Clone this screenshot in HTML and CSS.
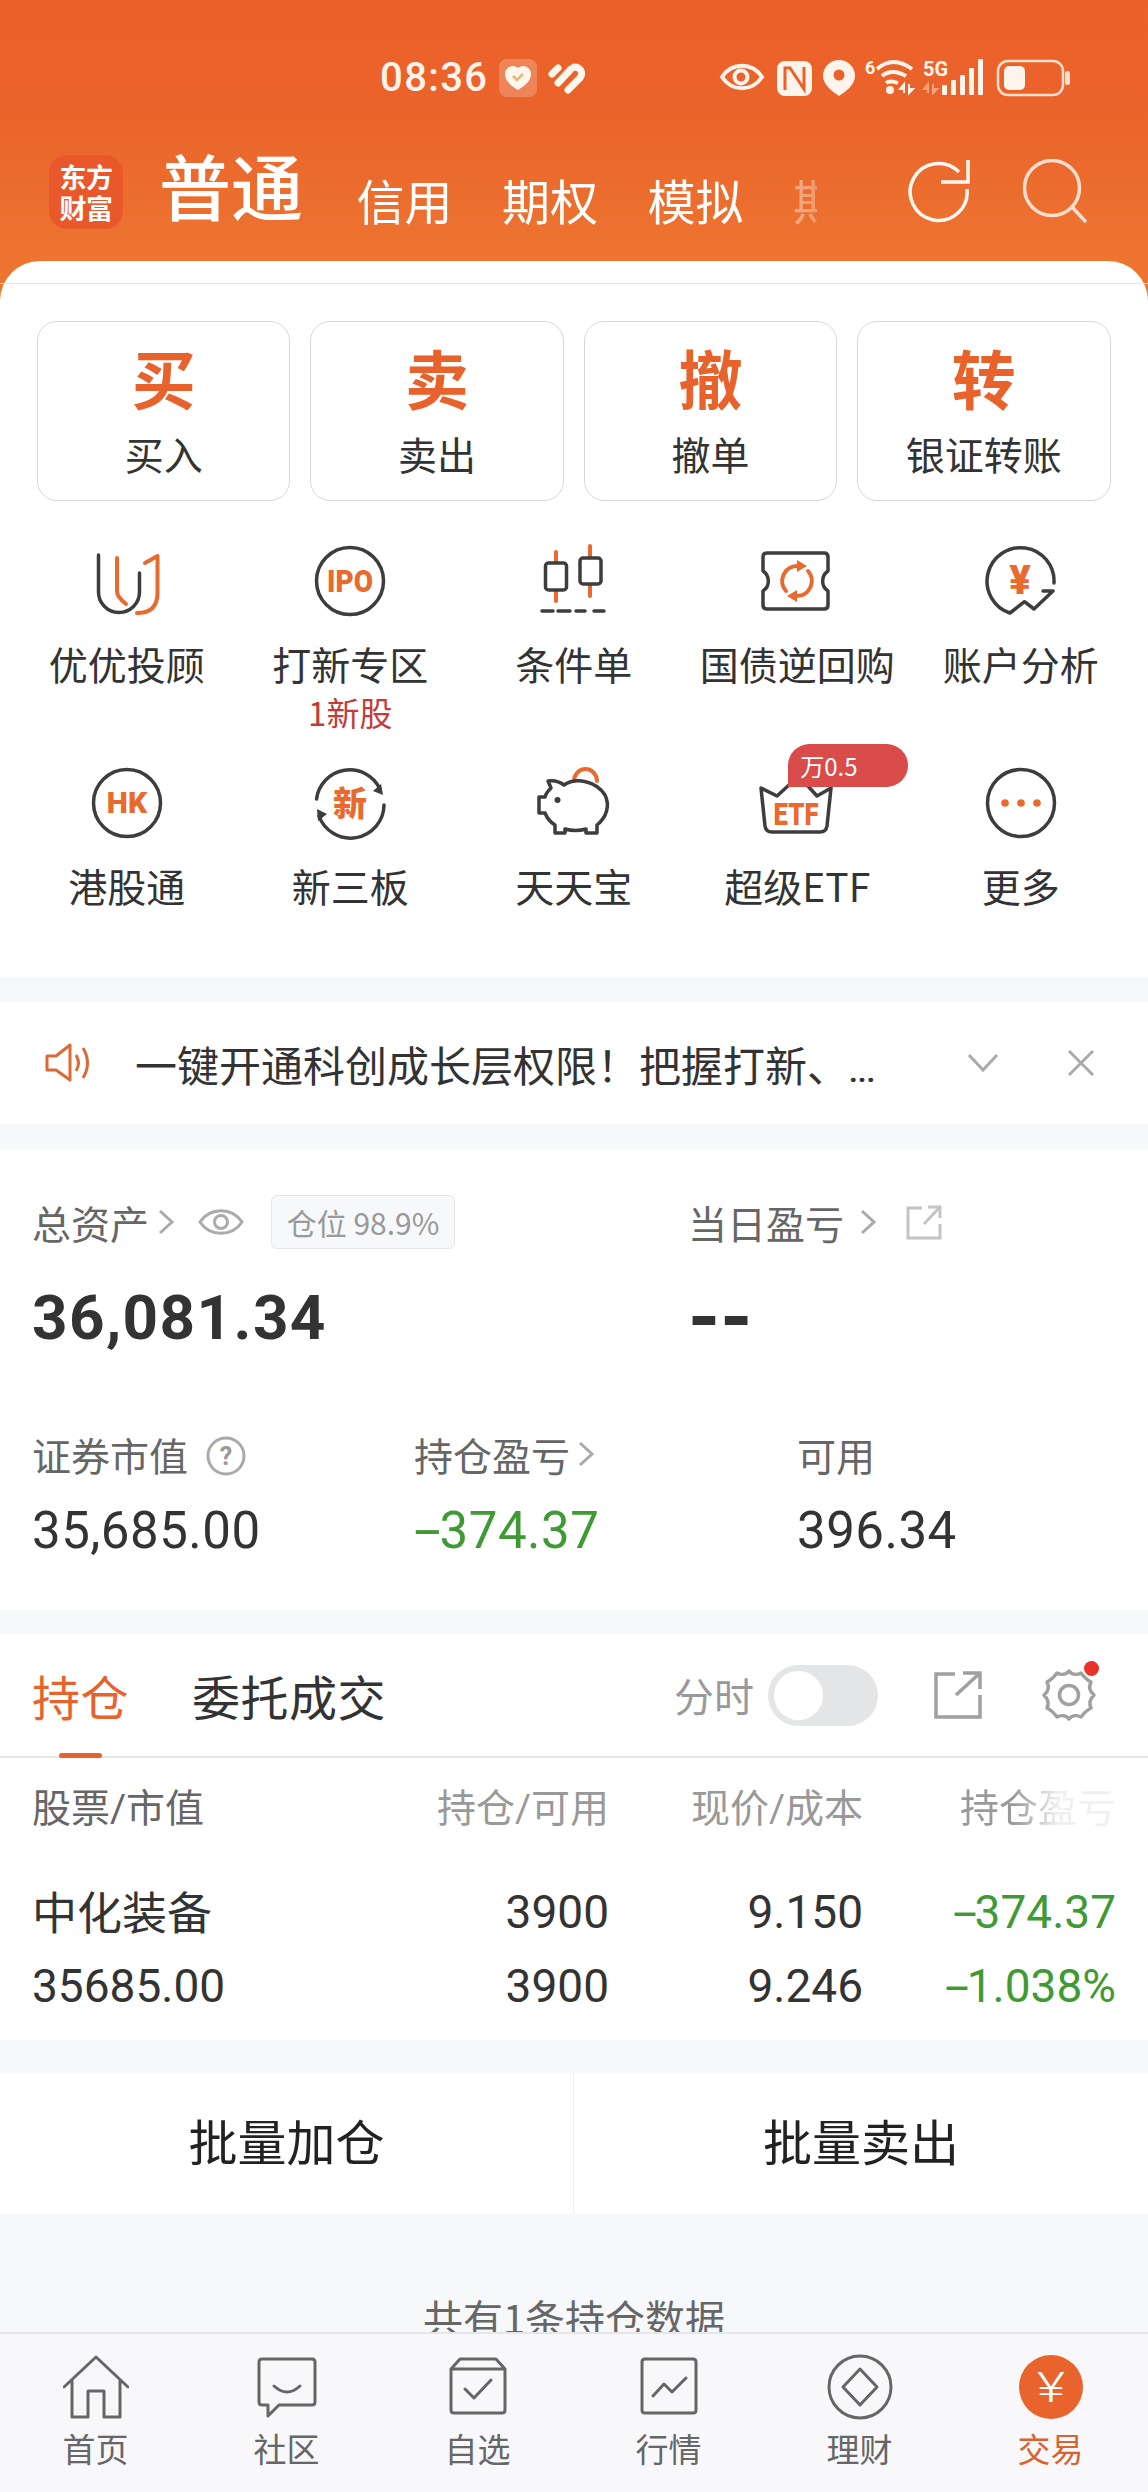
FILE: index.html
```html
<!DOCTYPE html>
<html lang="zh-CN">
<head>
<meta charset="utf-8">
<title>交易</title>
<link rel="stylesheet" href="styles.css">
</head>
<body>
<div class="page">
  <div class="main">
    <header class="header">
      <div class="status">
        <span class="time">08:36</span>
        <svg class="st-left" viewBox="495 55 95 45" width="95" height="45">
          <rect x="499" y="59" width="38" height="38" rx="8" fill="#fff" opacity=".22"/>
          <path d="M518 90 C508 84 505 79 505 74 C505 69 509 66 513 66 C515 66 517 67 518 68 C519 67 521 66 523 66 C527 66 531 69 531 74 C531 79 528 84 518 90Z" fill="#fff6ec"/>
          <path d="M513 76 L517 80 L523 74" fill="none" stroke="#eeb27e" stroke-width="2.5"/>
          <path d="M552 74 L558 68 M558 83 L571 69 M568 90 L580 78 C584 72 580 67 574 67" fill="none" stroke="#fff6ec" stroke-width="7" stroke-linecap="round"/>
        </svg>
        <svg class="st-right" viewBox="710 40 380 70" width="380" height="70">
          <path d="M722 77 C732 62 752 62 762 77 C752 92 732 92 722 77Z" fill="none" stroke="#fff4ec" stroke-width="4"/>
          <circle cx="741" cy="77" r="6.5" fill="none" stroke="#fff4ec" stroke-width="4"/>
          <rect x="777" y="61" width="35" height="35" rx="8" fill="#fff4ec"/>
          <path d="M785 90 V68 H790 L804 89 V67" fill="none" stroke="#ea6229" stroke-width="3"/>
          <path d="M839 60 C848 60 855 67 855 76 C855 85 845 92 839 96 C833 92 823 85 823 76 C823 67 830 60 839 60Z" fill="#fff4ec"/>
          <circle cx="839" cy="75" r="5.5" fill="#ea6229"/>
          <text class="st-tx" x="865" y="74">6</text>
          <path d="M877 69 Q893 55 912 69 M882 76 Q892 68 906 76 M886 83 Q890 80 898 83" fill="none" stroke="#fff4ec" stroke-width="4"/>
          <circle cx="890" cy="90" r="4" fill="#fff4ec"/>
          <path d="M904 93 V84 L900 89 H904 M909 84 V93 L913 89 H909" fill="#fff4ec" stroke="#fff4ec" stroke-width="2"/>
          <text class="st-tx5" x="923" y="76">5G</text>
          <path d="M928 93 V84 L924 89 H928 M933 84 V93 L937 89 H933" fill="#f3a27a" stroke="#f3a27a" stroke-width="2"/>
          <g fill="#fff4ec">
            <rect x="942" y="85" width="5" height="10" rx="1"/>
            <rect x="951" y="80" width="5" height="15" rx="1"/>
            <rect x="960" y="75" width="5" height="20" rx="1"/>
            <rect x="969" y="68" width="5" height="27" rx="1"/>
            <rect x="978" y="59" width="5" height="36" rx="1"/>
          </g>
          <rect x="998" y="61" width="65" height="34" rx="10" fill="none" stroke="#fff4ec" stroke-width="2.5" opacity=".85"/>
          <rect x="1004" y="66" width="21" height="24" rx="5" fill="#fff4ec"/>
          <rect x="1065" y="71" width="5" height="14" rx="2.5" fill="#fff4ec" opacity=".85"/>
        </svg>
      </div>
      <div class="nav">
        <div class="logo"><span>东方</span><span>财富</span></div>
        <div class="tabs">
          <span class="tab-on">普通</span>
          <span class="tab">信用</span>
          <span class="tab">期权</span>
          <span class="tab">模拟</span>
          <span class="tab">期货</span>
        </div>
        <svg class="nav-ic" viewBox="0 0 66 66" width="66" height="66">
          <path d="M60 30 A28.500 28.500 0 1 1 52 13" fill="none" stroke="#fff8f2" stroke-width="3.500"/>
          <path d="M34 26 H61 V4" fill="none" stroke="#fff8f2" stroke-width="3.500" stroke-linejoin="miter" transform="translate(0 -3)"/>
        </svg>
        <svg class="nav-ic dim" viewBox="0 0 66 66" width="66" height="66">
          <circle cx="30" cy="29" r="27.500" fill="none" stroke="#fff" stroke-width="3.500"/>
          <path d="M50 48 L64 63" fill="none" stroke="#fff" stroke-width="3.500"/>
        </svg>
      </div>
    </header>

    <section class="card">
      <div class="rule"></div>
      <div class="actions">
        <div class="action"><b>买</b><span>买入</span></div>
        <div class="action"><b>卖</b><span>卖出</span></div>
        <div class="action"><b>撤</b><span>撤单</span></div>
        <div class="action"><b>转</b><span>银证转账</span></div>
      </div>
      <div class="grid">
        <div class="cell">
          <svg class="gi" viewBox="0 0 80 80" width="80" height="80">
            <path class="k" d="M11.500 14 V51 A20.500 20.500 0 0 0 52.500 51 V32"/>
            <path class="o" d="M30 17 V50 Q30 56 39 63"/>
            <path class="o" d="M58 22 L70.500 15 V52 Q70.500 72 50 72"/>
          </svg>
          <span class="lb">优优投顾</span>
        </div>
        <div class="cell">
          <svg class="gi" viewBox="0 0 80 80" width="80" height="80">
            <circle class="k" cx="40" cy="40" r="33.500"/>
            <text class="ot" x="40" y="51" font-size="32" text-anchor="middle" textLength="46" lengthAdjust="spacingAndGlyphs">IPO</text>
          </svg>
          <span class="lb">打新专区</span>
          <span class="sub">1新股</span>
        </div>
        <div class="cell">
          <svg class="gi" viewBox="0 0 80 80" width="80" height="80">
            <path class="o" d="M22 11 V60 M56 5 V55"/>
            <rect class="kf" x="11.500" y="22" width="21" height="27" rx="3"/>
            <rect class="kf" x="46" y="17" width="21" height="26" rx="3"/>
            <path class="k" d="M8 70 H19 M24 70 H36 M42 70 H51 M60 70 H70"/>
          </svg>
          <span class="lb">条件单</span>
        </div>
        <div class="cell">
          <svg class="gi" viewBox="0 0 80 80" width="80" height="80">
            <path class="k" d="M10 12 H67 Q71 12 71 16 V30 A12 12 0 0 0 71 50 V64 Q71 68 67 68 H10 Q6 68 6 64 V50 A12 12 0 0 0 6 30 V16 Q6 12 10 12Z"/>
            <path class="o" d="M29 50 A15 15 0 0 1 40 25 M51 30 A15 15 0 0 1 40 55"/>
            <path class="of" d="M40 19 L50 25 L40 31Z M40 49 L30 55 L40 61Z"/>
          </svg>
          <span class="lb">国债逆回购</span>
        </div>
        <div class="cell">
          <svg class="gi" viewBox="0 0 80 80" width="80" height="80">
            <path class="k" d="M73 42 A33.500 33.500 0 1 0 29 72 L43.500 60.700 L53 68 L72 50 H62"/>
            <text class="ot" x="39" y="53" font-size="40" text-anchor="middle">¥</text>
          </svg>
          <span class="lb">账户分析</span>
        </div>
        <div class="cell">
          <svg class="gi" viewBox="0 0 80 80" width="80" height="80">
            <circle class="k" cx="40" cy="40" r="33.500"/>
            <text class="ot" x="40" y="50" font-size="30" text-anchor="middle">HK</text>
          </svg>
          <span class="lb">港股通</span>
        </div>
        <div class="cell">
          <svg class="gi" viewBox="0 0 80 80" width="80" height="80">
            <path class="k" d="M6.500 36 A33.500 33.500 0 0 1 70 26 M74 42 A33.500 33.500 0 0 1 9 53"/>
            <path class="kfill" d="M73 32 L63 28 L71 21Z M7 46 L17 51 L8 58Z"/>
            <text class="ot" x="40" y="53" font-size="34" text-anchor="middle">新</text>
          </svg>
          <span class="lb">新三板</span>
        </div>
        <div class="cell">
          <svg class="gi" viewBox="0 0 80 80" width="80" height="80">
            <path class="o" d="M40 18 A11.500 12 0 0 1 63 18"/>
            <path class="k" d="M14 18 C20 17 26 19 30 22 C42 14 62 18 71 32 C76 42 73 54 63 62 V70 H52 V66 C45 68 38 68 31 66 V70 H21 V62 C16 59 13 55 11 50 H5 V34 H11 C12 30 15 27 17 25Z"/>
            <circle cx="23.500" cy="37" r="3" fill="#3d3d3d"/>
          </svg>
          <span class="lb">天天宝</span>
        </div>
        <div class="cell">
          <div class="gi-wrap">
            <svg class="gi" viewBox="0 0 80 80" width="80" height="80">
              <path class="k" d="M4 25 L8 63 Q9 69 15 69 H63 Q69 69 70 63 L74 25 L60 33 L50 22 H32 L20 33Z"/>
              <text class="ot" x="39" y="62" font-size="32" text-anchor="middle" textLength="45" lengthAdjust="spacingAndGlyphs">ETF</text>
            </svg>
            <span class="tag">万0.5</span>
          </div>
          <span class="lb">超级ETF</span>
        </div>
        <div class="cell">
          <svg class="gi" viewBox="0 0 80 80" width="80" height="80">
            <circle class="k" cx="40" cy="40" r="33.500"/>
            <circle class="of" cx="24" cy="40" r="3.800"/>
            <circle class="of" cx="40" cy="40" r="3.800"/>
            <circle class="of" cx="56" cy="40" r="3.800"/>
          </svg>
          <span class="lb">更多</span>
        </div>
      </div>
    </section>

    <section class="notice">
      <svg class="n-ic" viewBox="0 0 48 42" width="48" height="42">
        <path d="M2 14 H11 L25 3 V38 L11 28 H2Z" fill="none" stroke="#dc6a38" stroke-width="3" stroke-linejoin="round"/>
        <path d="M31 13 Q36 21 31 29 M38 6 Q47 21 38 36" fill="none" stroke="#dc6a38" stroke-width="3"/>
      </svg>
      <span class="n-tx">一键开通科创成长层权限！把握打新、<i>...</i></span>
      <svg class="n-ch" viewBox="0 0 32 20" width="32" height="20"><path d="M2 2 L16 17 L30 2" fill="none" stroke="#aaa" stroke-width="3"/></svg>
      <svg class="n-x" viewBox="0 0 28 28" width="28" height="28"><path d="M2 2 L26 26 M26 2 L2 26" fill="none" stroke="#aaa" stroke-width="3"/></svg>
    </section>

    <section class="assets">
      <div class="a-top">
        <div class="a-col">
          <div class="a-lb">
            <span>总资产</span>
            <svg class="chev" viewBox="0 0 18 28" width="18" height="28"><path d="M3 3 L15 14 L3 25"/></svg>
            <svg class="a-eye" viewBox="0 0 46 30" width="46" height="30">
              <path d="M2 15 C12 0 34 0 44 15 C34 30 12 30 2 15Z" fill="none" stroke="#aaa" stroke-width="3"/>
              <circle cx="23" cy="15" r="6.500" fill="none" stroke="#aaa" stroke-width="3"/>
            </svg>
            <span class="pill">仓位 98.9%</span>
          </div>
          <div class="big">36,081.34</div>
        </div>
        <div class="a-col">
          <div class="a-lb">
            <span>当日盈亏</span>
            <svg class="chev wide" viewBox="0 0 18 28" width="18" height="28"><path d="M3 3 L15 14 L3 25"/></svg>
            <svg class="a-ext" viewBox="0 0 36 36" width="36" height="36">
              <path d="M16 4 H2 V34 H34 V20 M18 20 L34 3 M22 3 H34 V14" fill="none" stroke="#c4c4c4" stroke-width="3"/>
            </svg>
          </div>
          <div class="big dash">--</div>
        </div>
      </div>
      <div class="a-bot">
        <div class="a-col">
          <div class="a-lb">
            <span>证券市值</span>
            <svg class="q" viewBox="0 0 40 40" width="40" height="40">
              <circle cx="20" cy="20" r="18" fill="none" stroke="#aaa" stroke-width="3"/>
              <text x="20" y="29" font-size="25" text-anchor="middle" fill="#999" font-family="Roboto" font-weight="700">?</text>
            </svg>
          </div>
          <div class="mid">35,685.00</div>
        </div>
        <div class="a-col">
          <div class="a-lb">
            <span>持仓盈亏</span>
            <svg class="chev tight" viewBox="0 0 18 28" width="18" height="28"><path d="M3 3 L15 14 L3 25"/></svg>
          </div>
          <div class="mid green"><span class="minus">-</span>374.37</div>
        </div>
        <div class="a-col">
          <div class="a-lb"><span>可用</span></div>
          <div class="mid">396.34</div>
        </div>
      </div>
    </section>

    <section class="hold">
      <div class="h-tabs">
        <div class="h-tab on">持仓<i></i></div>
        <div class="h-tab">委托成交</div>
        <div class="h-tools">
          <span class="h-lb">分时</span>
          <span class="switch"><i></i></span>
          <svg class="h-ext" viewBox="0 0 48 48" width="48" height="48">
            <path d="M21 3 H2 V46 H46 V24 M22 24 L46 2 M29 2 H46 V18" fill="none" stroke="#a0a0a0" stroke-width="3.500"/>
          </svg>
          <div class="gear">
            <svg viewBox="0 0 56 56" width="56" height="56">
              <path d="M28 4 C31 8 36 8 40 6 C43 10 46 13 50 15 C48 19 48 24 53 28 C49 32 48 37 50 41 C46 43 43 46 40 50 C36 48 31 48 28 52 C25 48 20 48 16 50 C13 46 10 43 6 41 C8 37 7 32 3 28 C8 24 8 19 6 15 C10 13 13 10 16 6 C20 8 25 8 28 4Z" fill="none" stroke="#a0a0a0" stroke-width="3.500" stroke-linejoin="round"/>
              <circle cx="28" cy="28" r="9.500" fill="none" stroke="#a0a0a0" stroke-width="3.500"/>
            </svg>
            <i></i>
          </div>
        </div>
      </div>
      <div class="t-row t-head">
        <span class="t-first">股票/市值</span>
        <span>持仓/可用</span>
        <span>现价/成本</span>
        <span class="fade">持仓盈亏</span>
      </div>
      <div class="t-row t-a">
        <span class="t-name">中化装备</span>
        <span>3900</span>
        <span>9.150</span>
        <span class="green"><span class="minus">-</span>374.37</span>
      </div>
      <div class="t-row t-b">
        <span class="t-left">35685.00</span>
        <span>3900</span>
        <span>9.246</span>
        <span class="green"><span class="minus">-</span>1.038%</span>
      </div>
    </section>

    <section class="batch">
      <div class="b-btn">批量加仓</div>
      <div class="b-btn">批量卖出</div>
    </section>

    <p class="count">共有1条持仓数据</p>
  </div>

  <footer class="foot">
    <div class="f-it">
      <svg viewBox="0 0 66 66" width="66" height="66"><path class="f" d="M1 33 L33 3 L65 33 M9 26 V63 H25 V37 H41 V63 H57 V26"/></svg>
      <span>首页</span>
    </div>
    <div class="f-it">
      <svg viewBox="0 0 66 66" width="66" height="66"><path class="f" d="M8 5 H58 Q61 5 61 8 V48 Q61 51 58 51 H25 L14 62 V51 H8 Q5 51 5 48 V8 Q5 5 8 5Z M20 32 Q33 44 46 32"/></svg>
      <span>社区</span>
    </div>
    <div class="f-it">
      <svg viewBox="0 0 66 66" width="66" height="66"><path class="f" d="M15 5 H51 L60 15 V56 Q60 59 57 59 H9 Q6 59 6 56 V15Z M6 15 H60 M20 35 L29 44 L46 26"/></svg>
      <span>自选</span>
    </div>
    <div class="f-it">
      <svg viewBox="0 0 66 66" width="66" height="66"><path class="f" d="M9 5 H57 Q60 5 60 8 V56 Q60 59 57 59 H9 Q6 59 6 56 V8 Q6 5 9 5Z M17 42 L28 30 L36 38 L50 24"/></svg>
      <span>行情</span>
    </div>
    <div class="f-it">
      <svg viewBox="0 0 66 66" width="66" height="66"><circle class="f" cx="33" cy="33" r="31"/><path class="f" d="M33 15 L50 33 L33 51 L16 33Z"/></svg>
      <span>理财</span>
    </div>
    <div class="f-it act">
      <svg viewBox="0 0 66 66" width="66" height="66"><circle cx="33" cy="33" r="32" fill="#e9642c"/><text x="33" y="48" font-size="42" text-anchor="middle" textLength="28" lengthAdjust="spacingAndGlyphs" fill="#fff" font-family="Roboto" font-weight="300">¥</text></svg>
      <span>交易</span>
    </div>
  </footer>
</div>
</body>
</html>
```

FILE: styles.css
```css
* { box-sizing: border-box; }
html, body { margin: 0; padding: 0; }
body {
  font-family: "Noto Sans CJK SC", "Noto Sans", sans-serif;
  color: #333;
  background: #f7f8fa;
}
.page {
  width: 1148px;
  height: 2492px;
  display: flex;
  flex-direction: column;
  overflow: hidden;
}
.main { flex: 1; min-height: 0; overflow: hidden; background: #f7f8fa; }

/* header */
.header {
  height: 301px;
  background: linear-gradient(180deg, #ea6229 0, #ea632a 110px, #ed7531 261px, #ed7531 100%);
  color: #fff;
}
.status { height: 155px; display: flex; align-items: flex-start; padding: 40px 58px 0 380px; }
.time {
  font-family: Roboto, sans-serif;
  font-weight: 500;
  font-size: 40px;
  letter-spacing: 1.4px;
  line-height: 76px;
  color: #fff4ec;
  width: 115px;
  flex: none;
}
.st-left { flex: none; margin-top: 15px; }
.st-right { flex: none; margin-left: auto; }
.st-tx { font: 700 18px Roboto, sans-serif; fill: #fff4ec; }
.st-tx5 { font: 700 20px Roboto, sans-serif; fill: #fff4ec; }
.nav { display: flex; align-items: center; height: 74px; padding: 0 60px 0 49px; }
.logo {
  width: 74px;
  height: 74px;
  flex: none;
  border-radius: 18px;
  background: #e8582a;
  display: flex;
  flex-direction: column;
  align-items: center;
  justify-content: center;
  font-size: 27px;
  font-weight: 700;
}
.logo span { line-height: 31px; letter-spacing: -.5px; }
.tabs {
  width: 658px;
  margin: 0 -3px 16px 36px;
  flex: none;
  display: flex;
  align-items: flex-end;
  gap: 49.500px;
  white-space: nowrap;
  -webkit-mask-image: linear-gradient(90deg, #000 590px, rgba(0,0,0,.45) 631px, rgba(0,0,0,.3) 658px);
  mask-image: linear-gradient(90deg, #000 590px, rgba(0,0,0,.45) 631px, rgba(0,0,0,.3) 658px);
}
.tab-on { font-size: 72px; line-height: 90px; font-weight: 500; flex: none; margin-right: 4px; }
.tab { font-size: 48px; line-height: 60px; flex: none; }
.nav-ic { flex: none; margin-left: 49px; }
.tabs + .nav-ic { margin-left: auto; }
.dim { opacity: .78; }

/* card */
.card {
  position: relative;
  margin-top: -40px;
  background: #fff;
  border-radius: 40px 40px 0 0;
  padding-top: 22px;
  height: 716px;
}
.rule { height: 1px; background: #e6e6e6; }
.actions {
  display: grid;
  grid-template-columns: repeat(4, 253.400px);
  column-gap: 20px;
  padding: 37px 37px 0;
}
.action {
  height: 180px;
  border: 1.5px solid #d8d8d8;
  border-radius: 20px;
  display: flex;
  flex-direction: column;
  align-items: center;
}
.action b { font-size: 64px; line-height: 78px; color: #e8622c; margin-top: 15px; font-weight: 700; }
.action span { font-size: 39px; line-height: 50px; color: #333; margin-top: 13px; }
.grid {
  display: grid;
  grid-template-columns: repeat(5, 223.500px);
  padding: 40px 15px 0;
  row-gap: 33px;
}
.cell { display: flex; flex-direction: column; align-items: center; }
.gi { display: block; flex: none; }
.gi-wrap { position: relative; width: 80px; height: 80px; }
.k, .kf, .o { fill: none; stroke-width: 3.500; stroke-linecap: round; stroke-linejoin: round; }
.k, .kf { stroke: #3d3d3d; }
.kf { fill: #fff; }
.kfill { fill: #3d3d3d; }
.o { stroke: #e96a2e; stroke-width: 4; }
.of { fill: #e96a2e; }
.ot { fill: #e96a2e; font-family: Roboto, "Noto Sans CJK SC", sans-serif; font-weight: 900; }
.lb { font-size: 39px; line-height: 50px; margin-top: 17px; color: #333; white-space: nowrap; }
.sub { font-size: 33px; line-height: 36px; margin-top: 6px; color: #c23c3c; }
.tag {
  position: absolute;
  left: 31px;
  top: -19px;
  width: 120px;
  height: 43px;
  background: #d94c4a;
  border-radius: 22px 22px 22px 0;
  color: #fff;
  font-size: 24px;
  line-height: 43px;
  padding-left: 12px;
}

/* notice */
.notice {
  margin-top: 25px;
  height: 122px;
  background: #fff;
  display: flex;
  align-items: center;
  padding-left: 45px;
}
.n-ic { flex: none; }
.n-tx { flex: none; width: 780px; margin-left: 42px; font-size: 42px; white-space: nowrap; color: #333; }
.n-tx i { font-style: normal; font-family: Roboto, sans-serif; font-weight: 700; font-size: 30px; }
.n-ch { flex: none; margin-left: 52px; }
.n-x { flex: none; margin-left: 68px; }

/* assets */
.assets { margin-top: 25px; height: 461px; background: #fff; padding: 46px 0 0 32px; }
.a-top { display: grid; grid-template-columns: 656px 1fr; }
.a-bot { display: grid; grid-template-columns: 382px 383px 1fr; margin-top: 64px; }
.a-lb { display: flex; align-items: center; height: 54px; font-size: 39px; color: #666; white-space: nowrap; }
.chev { flex: none; margin-left: 8px; fill: none; stroke: #aaa; stroke-width: 3; }
.chev.tight { margin-left: 7px; }
.chev.wide { margin-left: 15px; }
.a-eye { flex: none; margin-left: 23px; }
.pill {
  margin-left: 27px;
  height: 54px;
  width: 184px;
  border: 1px solid #e6e6e8;
  border-radius: 6px;
  background: #f7f8fa;
  font-size: 30px;
  line-height: 52px;
  color: #999;
  text-align: center;
}
.a-ext { margin-left: 29px; flex: none; }
.q { flex: none; margin: 4px 0 0 18px; }
.big { font-family: Roboto, sans-serif; font-weight: 700; font-size: 62px; line-height: 90px; margin-top: 24px; letter-spacing: 1.4px; color: #333; }
.big.dash { font-size: 82px; margin-top: 23px; letter-spacing: 0; }
.mid { font-family: Roboto, sans-serif; font-size: 51px; line-height: 62px; margin-top: 19px; color: #333; letter-spacing: .5px; }
.green { color: #3f9a33; }
.minus { display: inline-block; transform: scaleX(1.9); transform-origin: left center; margin-right: 11px; }
.t-row .minus { margin-right: 9px; }

/* holdings */
.hold { margin-top: 24px; height: 406px; background: #fff; }
.h-tabs { display: flex; align-items: center; height: 124px; padding-left: 32px; border-bottom: 2px solid #e6e6e6; }
.h-tab { position: relative; font-size: 48px; color: #333; margin-right: 63px; line-height: 124px; letter-spacing: .5px; }
.h-tab.on { color: #e8622c; }
.h-tab i { position: absolute; left: 27px; bottom: -1px; width: 43px; height: 5px; background: #e8622c; border-radius: 3px; }
.h-tools { margin-left: auto; display: flex; align-items: center; padding-right: 51px; }
.h-lb { font-size: 40px; color: #999; }
.switch { width: 110px; height: 61px; margin-left: 14px; border-radius: 31px; background: #e4e5e7; padding: 6px; flex: none; }
.switch i { display: block; width: 49px; height: 49px; border-radius: 50%; background: #fff; }
.h-ext { flex: none; margin-left: 56px; }
.gear { position: relative; flex: none; width: 56px; height: 56px; margin-left: 59px; }
.gear svg { display: block; }
.gear i { position: absolute; right: -2px; top: -6px; width: 15px; height: 15px; border-radius: 50%; background: #e8322a; }
.t-row { display: grid; grid-template-columns: 327px 250px 254px 253px; padding: 0 32px; text-align: right; font-family: Roboto, "Noto Sans CJK SC", sans-serif; white-space: nowrap; }
.t-row > span:first-child { text-align: left; }
.t-head { font-size: 39px; line-height: 50px; color: #999; margin-top: 26px; }
.t-first { color: #666; }
.fade {
  -webkit-mask-image: linear-gradient(90deg, #000 150px, rgba(0,0,0,.15) 195px);
  mask-image: linear-gradient(90deg, #000 150px, rgba(0,0,0,.15) 195px);
}
.t-a { font-size: 46px; line-height: 60px; margin-top: 48px; }
.t-name { font-family: "Noto Sans CJK SC", sans-serif; font-size: 45px; margin-top: -1px; }
.t-b { font-size: 46px; line-height: 60px; margin-top: 14px; }

/* batch */
.batch { margin-top: 33px; height: 141px; background: #fff; display: grid; grid-template-columns: 573px 1fr; }
.b-btn { display: flex; align-items: center; justify-content: center; font-size: 49px; color: #222; padding-bottom: 8px; }
.b-btn + .b-btn { border-left: 1px solid #eee; }
.count { margin: 78px 0 0; text-align: center; font-size: 40px; line-height: 50px; color: #666; }

/* footer */
.foot {
  flex: none;
  height: 160px;
  background: #f8f8fb;
  border-top: 2px solid #e6e6ea;
  display: grid;
  grid-template-columns: repeat(6, 1fr);
  padding: 20px 2px 0 0;
}
.f-it { display: flex; flex-direction: column; align-items: center; }
.f-it svg { display: block; flex: none; }
.f-it span { font-size: 33px; line-height: 44px; margin-top: 6px; color: #666; }
.f-it.act span { color: #d9642e; }
.f { fill: none; stroke: #666; stroke-width: 3; stroke-linejoin: round; stroke-linecap: round; }
```
